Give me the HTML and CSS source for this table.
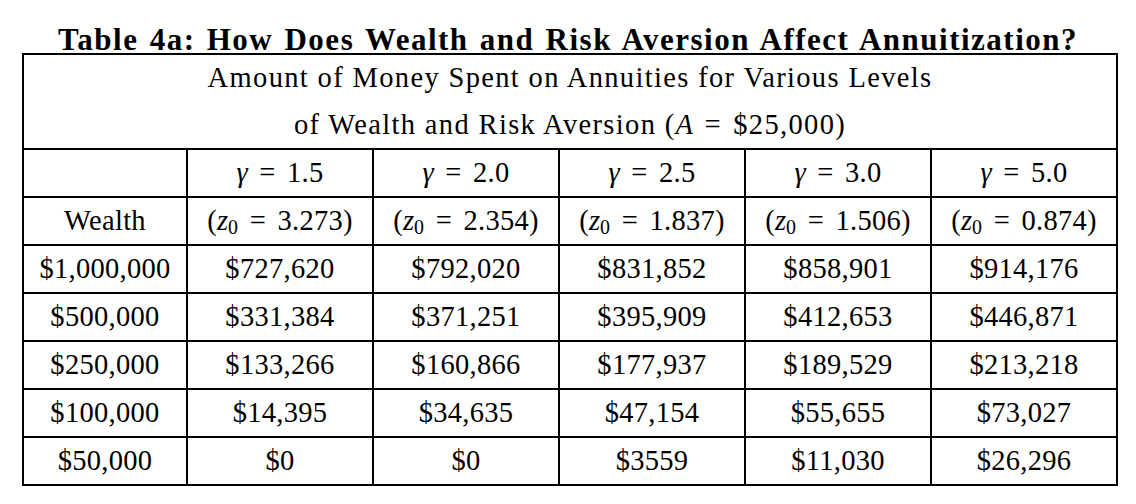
FILE: index.html
```html
<!DOCTYPE html>
<html>
<head>
<meta charset="utf-8">
<link rel="stylesheet" href="styles.css">
</head>
<body>
<h1 class="title">Table 4a: How Does Wealth and Risk Aversion Affect Annuitization?</h1>
<table class="grid">
  <colgroup>
    <col class="c-first">
    <col class="c-data"><col class="c-data"><col class="c-data"><col class="c-data"><col class="c-data">
  </colgroup>
  <tr class="cap-row">
    <td colspan="6" class="caption">Amount of Money Spent on Annuities for Various Levels<br>of Wealth and Risk Aversion (<i class="mi">A</i><span class="eq">=</span>$25,000)</td>
  </tr>
  <tr>
    <td></td>
    <td><i class="mi">γ</i><span class="eq">=</span>1.5</td>
    <td><i class="mi">γ</i><span class="eq">=</span>2.0</td>
    <td><i class="mi">γ</i><span class="eq">=</span>2.5</td>
    <td><i class="mi">γ</i><span class="eq">=</span>3.0</td>
    <td><i class="mi">γ</i><span class="eq">=</span>5.0</td>
  </tr>
  <tr>
    <td>Wealth</td>
    <td>(<i class="mi">z</i><sub class="sub">0</sub><span class="eq">=</span>3.273)</td>
    <td>(<i class="mi">z</i><sub class="sub">0</sub><span class="eq">=</span>2.354)</td>
    <td>(<i class="mi">z</i><sub class="sub">0</sub><span class="eq">=</span>1.837)</td>
    <td>(<i class="mi">z</i><sub class="sub">0</sub><span class="eq">=</span>1.506)</td>
    <td>(<i class="mi">z</i><sub class="sub">0</sub><span class="eq">=</span>0.874)</td>
  </tr>
  <tr><td>$1,000,000</td><td>$727,620</td><td>$792,020</td><td>$831,852</td><td>$858,901</td><td>$914,176</td></tr>
  <tr><td>$500,000</td><td>$331,384</td><td>$371,251</td><td>$395,909</td><td>$412,653</td><td>$446,871</td></tr>
  <tr><td>$250,000</td><td>$133,266</td><td>$160,866</td><td>$177,937</td><td>$189,529</td><td>$213,218</td></tr>
  <tr><td>$100,000</td><td>$14,395</td><td>$34,635</td><td>$47,154</td><td>$55,655</td><td>$73,027</td></tr>
  <tr><td>$50,000</td><td>$0</td><td>$0</td><td>$3559</td><td>$11,030</td><td>$26,296</td></tr>
</table>
</body>
</html>
```
FILE: styles.css
```css
html, body {
  margin: 0;
  padding: 0;
  background: #ffffff;
  color: #000000;
}

body {
  font-family: "Liberation Serif", "DejaVu Serif", serif;
  width: 1136px;
  height: 504px;
  overflow: hidden;
}

.title {
  margin: 0;
  padding-top: 27px;
  height: 26px;
  line-height: 26px;
  font-size: 31px;
  font-weight: bold;
  text-align: center;
  letter-spacing: 1.5px;
  word-spacing: 2px;
  white-space: nowrap;
}

.grid {
  margin-left: 22px;
  border-collapse: collapse;
  table-layout: fixed;
  width: 1094px;
  font-size: 28.5px;
}

.c-first { width: 164px; }
.c-data { width: 186px; }

.grid td {
  border: 2px solid #000;
  padding: 0;
  height: 46px;
  line-height: 46px;
  text-align: center;
  white-space: nowrap;
  letter-spacing: 0.3px;
}

.grid .caption {
  height: 93px;
  line-height: 46.5px;
  letter-spacing: 1.35px;
}

.mi {
  font-style: italic;
  letter-spacing: 0;
}

.eq {
  margin: 0 0.4em;
}

.sub {
  font-size: 0.7em;
  line-height: 0;
  vertical-align: -0.2em;
}
```
